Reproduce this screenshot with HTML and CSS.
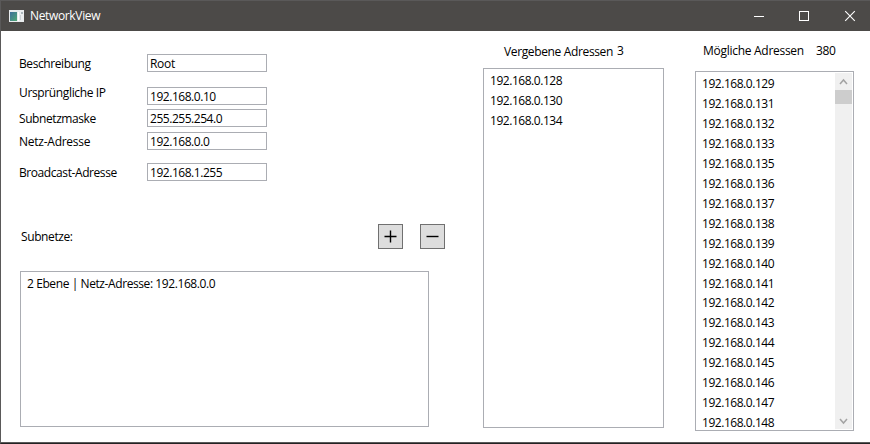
FILE: index.html
```html
<!DOCTYPE html>
<html lang="de">
<head>
<meta charset="utf-8">
<title>NetworkView</title>
<link rel="stylesheet" href="styles.css">
</head>
<body>
<div class="window">
  <header class="titlebar">
    <svg class="app-icon" width="15" height="12" viewBox="0 0 15 12">
      <defs><linearGradient id="g" x1="0" y1="0" x2="1" y2="1"><stop offset="0" stop-color="#3f6f9c"/><stop offset="1" stop-color="#4fa873"/></linearGradient></defs>
      <rect width="15" height="12" fill="#e9ecee"/>
      <rect x="1" y="2" width="7" height="9" fill="url(#g)"/>
      <rect x="9" y="2" width="1" height="9" fill="#fff"/>
      <rect x="12" y="2" width="2" height="2" fill="#a9b4ba"/>
      <rect x="11" y="5" width="1" height="5" fill="#c9d0d4"/>
    </svg>
    <span class="caption">NetworkView</span>
    <div class="controls">
      <svg width="46" height="30" viewBox="0 0 46 30"><path d="M18 15.500H28" stroke="#fff"/></svg>
      <svg width="46" height="30" viewBox="0 0 46 30"><rect x="17.500" y="10.500" width="9" height="9" fill="none" stroke="#fff"/></svg>
      <svg width="46" height="30" viewBox="0 0 46 30"><path d="M17.200 10.200l9.600 9.600M26.800 10.200l-9.600 9.600" stroke="#fff" stroke-width="1.100"/></svg>
    </div>
  </header>
  <main class="content">
    <section class="left">
      <div class="field"><label>Beschreibung</label><div class="input root">Root</div></div>
      <div class="field ip"><label class="raised">Ursprüngliche IP</label><div class="input">192.168.0.10</div></div>
      <div class="field mask"><label>Subnetzmaske</label><div class="input">255.255.254.0</div></div>
      <div class="field net"><label>Netz-Adresse</label><div class="input">192.168.0.0</div></div>
      <div class="field broadcast"><label>Broadcast-Adresse</label><div class="input">192.168.1.255</div></div>
      <div class="toolbar">
        <span class="toolbar-label">Subnetze:</span>
        <button class="btn" aria-label="Hinzufügen"><svg width="23" height="23" viewBox="0 0 23 23"><path d="M5.500 11.500H17.500M11.500 5.500V17.500" stroke="#000" stroke-width="1.400"/></svg></button>
        <button class="btn" aria-label="Entfernen"><svg width="23" height="23" viewBox="0 0 23 23"><path d="M5.500 11.500H17.500" stroke="#000" stroke-width="1.400"/></svg></button>
      </div>
      <ul class="list subnets"><li>2 Ebene | Netz-Adresse: 192.168.0.0</li></ul>
    </section>
    <section class="assigned">
      <div class="heading"><span>Vergebene Adressen</span><span class="count">3</span></div>
      <ul class="list"><li>192.168.0.128</li><li>192.168.0.130</li><li>192.168.0.134</li></ul>
    </section>
    <section class="possible">
      <div class="heading"><span>Mögliche Adressen</span><span class="count">380</span></div>
      <div class="scroller">
        <ul class="rows">
          <li>192.168.0.129</li><li>192.168.0.131</li><li>192.168.0.132</li><li>192.168.0.133</li><li>192.168.0.135</li><li>192.168.0.136</li><li>192.168.0.137</li><li>192.168.0.138</li><li>192.168.0.139</li><li>192.168.0.140</li><li>192.168.0.141</li><li>192.168.0.142</li><li>192.168.0.143</li><li>192.168.0.144</li><li>192.168.0.145</li><li>192.168.0.146</li><li>192.168.0.147</li><li>192.168.0.148</li>
        </ul>
        <div class="scrollbar">
          <svg width="17" height="17" viewBox="0 0 17 17"><path d="M5 11l3.500-4 3.500 4" fill="none" stroke="#a3a3a3" stroke-width="1.500"/></svg>
          <div class="thumb"></div>
          <svg class="down" width="17" height="17" viewBox="0 0 17 17"><path d="M5 7l3.500 4 3.500-4" fill="none" stroke="#a3a3a3" stroke-width="1.500"/></svg>
        </div>
      </div>
    </section>
  </main>
</div>
</body>
</html>
```
FILE: styles.css
```css
* { box-sizing: border-box; }
body {
  margin: 0;
  font: 12px/16px "Open Sans", "Noto Sans", sans-serif;
  letter-spacing: -0.46px;
  color: #000;
  background: #fff;
}
ul { list-style: none; margin: 0; padding: 0; }
svg { display: block; }
.window {
  width: 870px;
  height: 444px;
  display: flex;
  flex-direction: column;
  border-left: 1px solid #5a5959;
  border-bottom: 1px solid #232323;
  overflow: hidden;
}
.titlebar {
  height: 31px;
  flex: none;
  display: flex;
  align-items: center;
  background: #4c4a48;
  border-top: 1px solid #5a5959;
  color: #fff;
}
.app-icon { margin-left: 8px; margin-top: -1px; }
.caption { margin-left: 6px; letter-spacing: -0.35px; }
.controls { margin-left: auto; display: flex; margin-top: -1px; margin-right: -4px; }
.content {
  flex: 1;
  min-height: 0;
  display: flex;
  align-items: flex-start;
  border-bottom: 1px solid #5a5959;
}
.left { width: 482px; padding: 23px 0 0 18px; }
.field { display: flex; height: 18px; }
.field label { width: 128px; line-height: 20px; letter-spacing: -0.42px; }
.field label.raised { margin-top: -4px; letter-spacing: -0.36px; }
.ip { margin-top: 15px; }
.mask { margin-top: 4px; }
.net { margin-top: 5px; }
.net label { letter-spacing: -0.25px; }
.broadcast { margin-top: 13px; }
.input { width: 120px; height: 18px; border: 1px solid #abadb3; padding-left: 2px; line-height: 17px; }
.root { letter-spacing: -0.3px; }
.toolbar { display: flex; align-items: center; height: 25px; margin-top: 43px; padding-left: 2px; }
.toolbar-label { width: 357px; letter-spacing: -0.4px; }
.btn { width: 25px; height: 25px; padding: 0; background: #ddd; border: 1px solid #707070; margin-right: 17px; flex: none; }
.list { border: 1px solid #abadb3; padding: 2px 6px; }
.list li { height: 20px; line-height: 20px; }
.subnets { width: 409px; height: 156px; margin: 22px 0 0 1px; }
.list.subnets li { letter-spacing: -0.41px; }
.heading { display: flex; height: 16px; letter-spacing: -0.28px; }
.assigned { width: 181px; padding-top: 13px; }
.assigned .heading { padding-left: 21px; letter-spacing: -0.36px; }
.assigned .count { margin: -1px 0 0 4px; }
.assigned .list { height: 360px; margin-top: 8px; }
.possible { width: 159px; margin-left: 31px; padding-top: 12px; }
.possible .heading { padding-left: 8px; }
.possible .count { margin-left: 12px; }
.scroller { height: 360px; margin-top: 12px; border: 1px solid #abadb3; padding: 1px; display: flex; overflow: hidden; }
.rows { flex: 1; padding: 1px 0 0 5px; }
.rows li { height: 19.96px; line-height: 20px; }
.scrollbar { width: 17px; display: flex; flex-direction: column; background: #f0f0f0; }
.thumb { height: 14px; background: #cdcdcd; }
.down { margin-top: auto; }
```
